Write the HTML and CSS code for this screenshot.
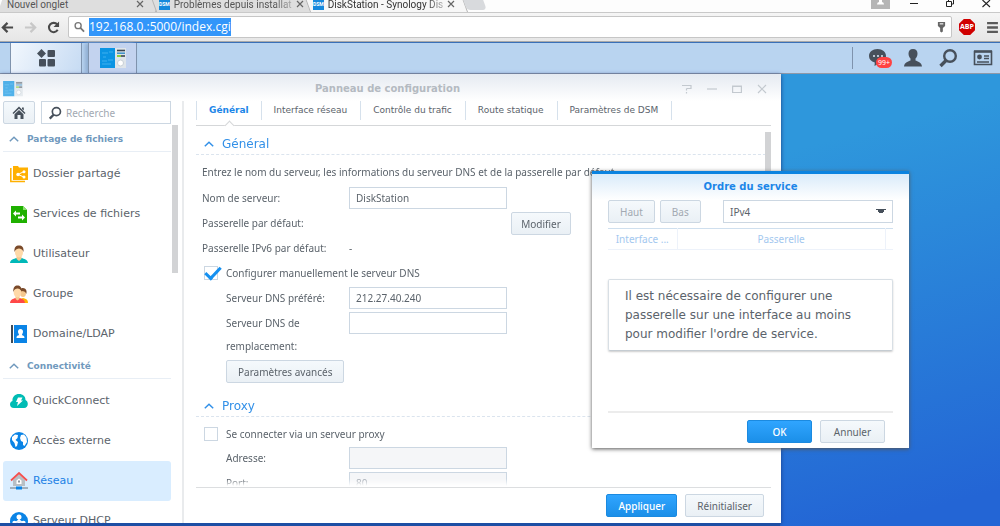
FILE: index.html
```html
<!DOCTYPE html>
<html lang="fr">
<head>
<meta charset="utf-8">
<title>DiskStation - Synology DiskStation</title>
<link rel="stylesheet" href="styles.css">
</head>
<body>
<svg class="defs" aria-hidden="true">
  <symbol id="panel" viewBox="0 0 26 21">
    <rect width="15" height="20" fill="#0b94e3"/><rect x="15" width="11" height="20" fill="#dfe5ea"/>
    <path d="M2 5h6M9 4h4M3 9h3M2 13h5M8 12h5M2 16h9" stroke="#3fb0ef" stroke-width="1"/>
    <path d="M17 2.500h8" stroke="#3c4650" stroke-width="1.600"/><path d="M17 5.200h8" stroke="#3a90c8" stroke-width="1.500"/><path d="M17 8h4" stroke="#7ac810" stroke-width="1.600"/><path d="M21 8h4" stroke="#3c4650" stroke-width="1.600"/>
    <circle cx="20.500" cy="15" r="3" fill="#fff" stroke="#bcc6ce" stroke-width=".8"/>
  </symbol>
  <symbol id="lens" viewBox="0 0 20 20">
    <circle cx="12" cy="8" r="5.800" fill="none" stroke="#47505b" stroke-width="2.400"/><path d="M8 12.500L2.500 18" stroke="#47505b" stroke-width="3.400"/>
  </symbol>
  <symbol id="up" viewBox="0 0 10 6"><path d="M.8 5.200L5 1.200 9.200 5.200" fill="none" stroke="currentColor" stroke-width="1.500"/></symbol>
  <symbol id="close" viewBox="0 0 8 8"><path d="M1 1l6 6M7 1L1 7" stroke="currentColor" stroke-width="1.200"/></symbol>
</svg>

<header class="browser">
  <div class="strip">
    <div class="tab"><span class="tab-name">Nouvel onglet</span><button class="tab-close" aria-label="Fermer"><svg><use href="#close"/></svg></button></div>
    <div class="tab"><span class="fav">DSM</span><span class="tab-name">Problèmes depuis installat</span><button class="tab-close" aria-label="Fermer"><svg><use href="#close"/></svg></button></div>
    <div class="tab active"><span class="fav">DSM</span><span class="tab-name">DiskStation - Synology Dis</span><button class="tab-close" aria-label="Fermer"><svg><use href="#close"/></svg></button></div>
    <button class="new-tab" aria-label="Nouvel onglet"></button>
    <div class="os-buttons">
      <button aria-label="Profil" class="profile"><svg viewBox="0 0 19 9"><path d="M6 4.500Q6 2 8 2V0h3v2q2 0 2 2.500z" fill="#fff"/></svg></button>
      <button aria-label="Réduire"><svg viewBox="0 0 10 8"><path d="M1 3.500h8" stroke="#222"/></svg></button>
      <button aria-label="Restaurer"><svg viewBox="0 0 10 8"><path d="M1.500 1.500h5v5h-5zM3.500 1V-1h5v5h-2" fill="none" stroke="#222"/></svg></button>
      <button aria-label="Fermer"><svg viewBox="0 0 10 8"><path d="M1.500 0L9 7M9 0L1.500 7" stroke="#222" stroke-width="1.100"/></svg></button>
    </div>
  </div>
  <div class="toolbar">
    <button aria-label="Précédent"><svg viewBox="0 0 14 14"><path d="M7 2L2 7l5 5M2 7h11" fill="none" stroke="#4a4a4a" stroke-width="2.400"/></svg></button>
    <button aria-label="Suivant"><svg viewBox="0 0 14 14"><path d="M7 2l5 5-5 5M12 7H1" fill="none" stroke="#c8c8c8" stroke-width="2.400"/></svg></button>
    <button aria-label="Actualiser"><svg viewBox="0 0 14 14"><path d="M11.500 9.500A5 5 0 1 1 11 3.800" fill="none" stroke="#4a4a4a" stroke-width="2.200"/><path d="M13 .5v6H7z" fill="#4a4a4a"/></svg></button>
    <div class="address">
      <svg viewBox="0 0 12 12" class="find"><circle cx="4.500" cy="4.500" r="3.300" fill="none" stroke="#777" stroke-width="1.500"/><path d="M7 7l4 4" stroke="#777" stroke-width="2"/></svg>
      <div class="url" role="textbox" contenteditable="true" aria-label="Adresse"><span>192.168.0.:5000/index.cgi</span></div>
      <svg viewBox="0 0 10 12" class="key"><path d="M1 .5h8v4.500L6.500 7v4L5 12 3.500 11V7L1 5z" fill="#666"/><path d="M3 2.500h4" stroke="#fff" stroke-width="1.200"/></svg>
    </div>
    <button class="abp" aria-label="Adblock Plus">ABP</button>
    <button aria-label="Menu" class="menu"><svg viewBox="0 0 12 12"><path d="M1 2h10M1 6h10M1 10h10" stroke="#5a5a5a" stroke-width="2.200"/></svg></button>
  </div>
</header>

<nav class="taskbar">
  <button class="apps" aria-label="Menu principal"><svg viewBox="0 0 18 18"><path d="M4.500 0L9 4.500 4.500 9 0 4.500z" fill="#47505b"/><rect x="10.500" y="1" width="7.500" height="7" rx="1" fill="#47505b"/><rect x="2" y="10" width="7" height="7.500" rx="1" fill="#47505b"/><rect x="10.500" y="10" width="7.500" height="7.500" rx="1" fill="#47505b"/></svg></button>
  <button class="running" aria-label="Panneau de configuration"><svg><use href="#panel"/></svg></button>
  <div class="tray">
    <button class="notify" aria-label="Notifications"><svg viewBox="0 0 20 20"><path d="M9.500 1C14.500 1 18 4 18 8s-3 7-7 7.200L6.500 18l.3-3.500C3 13.500 1 11 1 8c0-4 3.500-7 8.500-7z" fill="#47505b"/><path d="M5 8h2M9 8h2M13 8h2" stroke="#dce8f5" stroke-width="1.600"/></svg><span class="badge">99+</span></button>
    <button aria-label="Utilisateur"><svg viewBox="0 0 20 20"><path d="M10 1c3 0 4.500 2 4.500 4.500 0 2.500-1 4-2 5v2c2 1 6 1.500 6.500 6H1c.5-4.500 4.500-5 6.500-6v-2c-1-1-2-2.500-2-5C5.500 3 7 1 10 1z" fill="#47505b"/></svg></button>
    <button aria-label="Rechercher"><svg><use href="#lens"/></svg></button>
    <button aria-label="Widgets"><svg viewBox="0 0 20 20"><path d="M1.500 3.500h17v13h-17z" fill="none" stroke="#47505b" stroke-width="1.600"/><path d="M1 3.500h18" stroke="#47505b" stroke-width="2.500"/><circle cx="6.500" cy="9" r="2.400" fill="#47505b"/><path d="M11 8h5M11 10.500h5M4 14h12" stroke="#47505b" stroke-width="1.400"/></svg></button>
  </div>
</nav>

<main class="desktop">
  <section class="window">
    <header class="title-bar">
      <svg class="app-icon"><use href="#panel"/></svg>
      <h1>Panneau de configuration</h1>
      <div class="controls">
        <button aria-label="Aide"><svg viewBox="0 0 10 10"><path d="M0 1.500h9v3H4.500M4.500 4.500v2M4.500 8v1.500" fill="none" stroke="#c3c9cf" stroke-width="1.200"/></svg></button>
        <button aria-label="Réduire"><svg viewBox="0 0 10 10"><path d="M0 5h10" stroke="#c3c9cf" stroke-width="1.200"/></svg></button>
        <button aria-label="Agrandir"><svg viewBox="0 0 10 10"><path d="M.6 2h8.800v6.500H.6zM0 2.300h10" fill="none" stroke="#c3c9cf" stroke-width="1.200"/></svg></button>
        <button aria-label="Fermer"><svg viewBox="0 0 10 10"><path d="M1 1l8 8M9 1L1 9" stroke="#c3c9cf" stroke-width="1.200"/></svg></button>
      </div>
    </header>
    <div class="window-body">
      <aside class="sidebar">
        <div class="side-tools">
          <button class="btn home" aria-label="Accueil"><svg viewBox="0 0 14 14"><path d="M7 .5L13.500 7l-1 1L7 2.800 1.500 8l-1-1z" fill="#47505b"/><path d="M7 4l4.500 4.300V13h-3V9h-3v4h-3V8.300zM10 1.500h1.800v3L10 3z" fill="#47505b"/></svg></button>
          <label class="search"><svg><use href="#lens"/></svg><input type="search" placeholder="Recherche" aria-label="Recherche"></label>
        </div>
        <div class="side-scroll">
          <h2><svg><use href="#up"/></svg>Partage de fichiers</h2>
          <ul>
            <li><a href="#"><svg viewBox="0 0 18 18"><path d="M3 1h5l1 1.500h9V15H3z" fill="#ffb000"/><path d="M.8 3v13.500H15" fill="none" stroke="#ffb000" stroke-width="1.500"/><path d="M14 6.500L8 9.500l6 2.500" fill="none" stroke="#fff"/><circle cx="8" cy="9.500" r="1.700" fill="#fff"/><circle cx="14" cy="6.800" r="1.500" fill="#fff"/><circle cx="14" cy="12" r="1.500" fill="#fff"/></svg>Dossier partagé</a></li>
            <li><a href="#"><svg viewBox="0 0 18 18"><path d="M1 1h12l4 4v13H1z" fill="#1fb000"/><path d="M13 1v4h4z" fill="#8ce070"/><path d="M3 8.500l3-3v2h4v2H6v2zM15 12.500l-3-3v2H8v2h4v2z" fill="#fff"/></svg>Services de fichiers</a></li>
            <li><a href="#"><svg viewBox="0 0 18 18"><path d="M0 18c.5-4 4-4 6.500-5h5c2.500 1 6 1 6.500 5z" fill="#00b8b8"/><path d="M6.500 11h5v3L9 16l-2.500-2z" fill="#f5c88f"/><ellipse cx="9" cy="7.500" rx="4" ry="5" fill="#ffd9a8"/><path d="M4.500 7C4 2 6 .5 9 .5S14 2 13.500 7c-1-3-3-3.500-4.500-3.500S5.500 4 4.500 7z" fill="#7a4a2a"/></svg>Utilisateur</a></li>
            <li><a href="#"><svg viewBox="0 0 18 18"><path d="M10 18v-4l3-1c3 1 5 1 5 5z" fill="#ffb400"/><ellipse cx="13" cy="8" rx="3" ry="4" fill="#f5c88f"/><path d="M10 5c1-3 6-2.500 6.500 1v3c-1-2-2-3-5-3z" fill="#7a4a2a"/><path d="M0 18c.5-4 3-4 5.500-5h4c2.500 1 5 1 5.500 5z" fill="#ff4848"/><path d="M5.500 11h4v3l-2 1.500-2-1.500z" fill="#f5c88f"/><ellipse cx="7.500" cy="7.500" rx="3.800" ry="5" fill="#ffd9a8"/><path d="M3.300 7C3 2 5 .5 7.500.5S12 2 11.700 7c-1-3-2.500-3.500-4.200-3.500S4.300 4 3.300 7z" fill="#7a4a2a"/></svg>Groupe</a></li>
            <li><a href="#"><svg viewBox="0 0 18 18"><path d="M1 0h2v18H1z" fill="#3e4b57"/><path d="M4 0h13v18H4z" fill="#0a84e6"/><path d="M10.500 4c2 0 2.500 1.500 2.500 2.800 0 1.500-1 2.200-1 3.200 1 .8 2.500.5 2.500 3h-8c0-2.500 1.500-2.200 2.500-3 0-1-1-1.700-1-3.200C8 5.500 8.500 4 10.500 4z" fill="#fff"/></svg>Domaine/LDAP</a></li>
          </ul>
          <h2><svg><use href="#up"/></svg>Connectivité</h2>
          <ul>
            <li><a href="#"><svg viewBox="0 0 18 18"><path d="M4 16c-5 0-5-6-1.500-7C2 5 5 2 9 2s6.500 2.500 6.500 6c3.500 1.500 3 8-1.500 8z" fill="#00bcb4"/><path d="M8 5.500h4.500L11 8.500h2L7 14l1-4H6z" fill="#fff"/></svg>QuickConnect</a></li>
            <li><a href="#"><svg viewBox="0 0 18 18"><circle cx="9" cy="9" r="9" fill="#0a84e6"/><path d="M2 5l3-2.500 3 .5-.5 3L5.500 8l2.500 2-1 4-1.500 1-1-4L2 8zM11 3l3-.5 2.500 3L17 10l-2.500 4-1.500-1v-3l-2-1-1-3z" fill="#fff"/></svg>Accès externe</a></li>
            <li><a href="#" class="selected" aria-current="page"><svg viewBox="0 0 18 18"><path d="M3 8l6-6 6 6v6H3z" fill="#b8bfc5"/><path d="M9 6.500l2.500 2V12h-5V8.500z" fill="#fff"/><path d="M8 8.500h2v2H8z" fill="#8f989f"/><path d="M1 8.500L9 1l8 7.500" fill="none" stroke="#f5504e" stroke-width="1.800"/><path d="M0 16h18" stroke="#66727c"/><path d="M6 14.500h6v3H6z" fill="#0a84e6"/></svg>Réseau</a></li>
            <li><a href="#"><svg viewBox="0 0 18 18"><circle cx="9" cy="9" r="9" fill="#0a84e6"/><path d="M9 4v4M9 8l-4 3M9 8l4 3" stroke="#fff" stroke-width="1.500"/><circle cx="9" cy="5" r="2.500" fill="#fff"/><circle cx="4.500" cy="11" r="2.200" fill="#fff"/><circle cx="13.500" cy="11" r="2.200" fill="#fff"/><circle cx="9" cy="11" r="2" fill="#fff"/></svg>Serveur DHCP</a></li>
          </ul>
        </div>
      </aside>
      <div class="content">
        <nav class="tabs">
          <a href="#" class="current">Général</a><a href="#">Interface réseau</a><a href="#">Contrôle du trafic</a><a href="#">Route statique</a><a href="#">Paramètres de DSM</a>
        </nav>
        <form class="settings">
          <h3><svg><use href="#up"/></svg>Général</h3>
          <p>Entrez le nom du serveur, les informations du serveur DNS et de la passerelle par défaut.</p>
          <div class="row"><label for="name">Nom de serveur:</label><input id="name" type="text" value="DiskStation"></div>
          <div class="row"><span>Passerelle par défaut:</span><button type="button" class="btn modify">Modifier</button></div>
          <div class="row"><span>Passerelle IPv6 par défaut:</span><span>-</span></div>
          <div class="check"><input type="checkbox" id="manual" checked><label for="manual">Configurer manuellement le serveur DNS</label></div>
          <div class="row inner"><label for="dns1">Serveur DNS préféré:</label><input id="dns1" type="text" value="212.27.40.240"></div>
          <div class="row inner tall"><label for="dns2">Serveur DNS de remplacement:</label><input id="dns2" type="text"></div>
          <div class="inner"><button type="button" class="btn advanced">Paramètres avancés</button></div>
          <h3 class="second"><svg><use href="#up"/></svg>Proxy</h3>
          <div class="check proxy"><input type="checkbox" id="proxy"><label for="proxy">Se connecter via un serveur proxy</label></div>
          <div class="row inner"><label for="addr">Adresse:</label><input id="addr" type="text" disabled></div>
          <div class="row inner"><label for="port">Port:</label><input id="port" type="text" value="80" disabled></div>
        </form>
        <footer class="actions">
          <button class="btn primary">Appliquer</button><button class="btn">Réinitialiser</button>
        </footer>
      </div>
    </div>
  </section>

  <section class="dialog" role="dialog" aria-labelledby="dlg">
    <h2 id="dlg">Ordre du service</h2>
    <div class="dialog-tools">
      <button class="btn" disabled>Haut</button><button class="btn" disabled>Bas</button>
      <select aria-label="Protocole"><option>IPv4</option><option>IPv6</option></select>
    </div>
    <table><thead><tr><th class="iface">Interface ...</th><th>Passerelle</th><th class="end"></th></tr></thead></table>
    <p class="message">Il est nécessaire de configurer une passerelle sur une interface au moins pour modifier l'ordre de service.</p>
    <footer><button class="btn primary">OK</button><button class="btn">Annuler</button></footer>
  </section>
</main>
</body>
</html>
```
FILE: styles.css
```css
* { box-sizing: border-box; }
body {
  margin: 0;
  height: 100vh;
  display: flex;
  flex-direction: column;
  overflow: hidden;
  font: 10px/14px "Noto Sans", Tahoma, sans-serif;
  color: #5b636b;
}
button, input, select { font: inherit; color: inherit; margin: 0; }
button { border: 0; padding: 0; background: none; }
a { color: inherit; text-decoration: none; }
h1, h2, h3, p, ul { margin: 0; padding: 0; font-weight: normal; }
ul { list-style: none; }
svg { display: block; flex: none; }
.defs { display: none; }

/* Browser */
.browser { font-family: "Open Sans", "Noto Sans", sans-serif; color: #555; }
.strip { display: flex; height: 13px; background: #fdfdfd; border-bottom: 1px solid #c9c9c9; overflow: hidden; }
.tab {
  position: relative;
  z-index: 0;
  display: flex;
  width: 154px;
  gap: 4px;
  padding: 0 10px 0 5px;
  font: 10px/9px Roboto, "Open Sans", sans-serif;
}
.tab::before {
  content: "";
  position: absolute;
  z-index: -1;
  inset: 0 -4px 0 0;
  background: #dedede;
  border-right: 1px solid #b4b4b4;
  transform: skewX(-20deg);
}
.tab + .tab::before { border-left: 1px solid #b4b4b4; transform: skewX(20deg); }
.tab.active { color: #333; height: 13px; }
.tab.active::before { background: #f7f7f7; }
.tab:first-child { padding-left: 7px; }
.tab-name {
  flex: 1;
  height: 12px;
  white-space: nowrap;
}
.tab + .tab .tab-name { mask-image: linear-gradient(90deg, #000 85%, #0005); }
.tab-close { width: 8px; height: 8px; color: #666; }
.tab-close svg { width: 8px; height: 8px; }
.fav { width: 12px; height: 10px; background: #1688dc; color: #fff; font-size: 5px; font-weight: bold; text-align: center; }
.new-tab { width: 20px; height: 10px; margin-left: 3px; background: #d8dadd; border-radius: 0 0 4px 4px; transform: skewX(20deg); }
.os-buttons { display: flex; margin-left: auto; gap: 26px; padding-right: 9px; align-items: flex-start; }
.os-buttons svg { width: 10px; height: 8px; }
.os-buttons .profile, .os-buttons .profile svg { width: 19px; height: 9px; background: #b5b5b5; }
.os-buttons .profile { margin-right: -7px; }
.toolbar {
  display: flex;
  align-items: center;
  gap: 10px;
  height: 29px;
  padding: 0 1px;
  background: linear-gradient(#f5f5f5, #e6e6e6);
  border-bottom: 1px solid #a9a9a9;
}
.toolbar > button svg { width: 13px; height: 13px; }
.address {
  flex: 1;
  display: flex;
  align-items: center;
  gap: 4px;
  height: 22px;
  margin-left: -2px;
  padding: 0 5px;
  background: #fff;
  border: 1px solid #c6c6c6;
  border-radius: 2px;
}
.find { width: 11px; height: 12px; }
.key { width: 9px; height: 12px; }
.url { flex: 1; font-size: 12px; line-height: 18px; color: #fff; }
.url span { display: inline-block; background: #3296fa; }
.toolbar .abp {
  width: 16px;
  height: 16px;
  margin-left: -3px;
  background: #d00000;
  clip-path: polygon(30% 0, 70% 0, 100% 30%, 100% 70%, 70% 100%, 30% 100%, 0 70%, 0 30%);
  color: #fff;
  font-size: 7px;
  font-weight: bold;
  line-height: 16px;
}
.toolbar .menu { margin-left: 1px; }

/* DSM taskbar */
.taskbar {
  display: flex;
  height: 32px;
  padding-left: 10px;
  background: #b9d4f0;
  border-top: 1px solid #3a70b8;
  border-bottom: 1px solid #8e98a8;
}
.taskbar button { display: grid; place-items: center; }
.apps { width: 72px; }
.taskbar .apps { background: linear-gradient(115deg, #f2f7fd, #c6dbf3); border: solid #7f93ad; border-width: 0 1px; }
.apps svg { width: 18px; height: 18px; }
.taskbar .running { width: 49px; margin-left: 6px; background: #c3d3ef; border: solid #7f93ad; border-width: 0 1px; box-shadow: -3px 0 4px #8fadd1; }
.running svg { width: 26px; height: 21px; }
.tray { display: flex; align-items: center; gap: 15px; margin: 0 7px 0 auto; }
.tray::before { content: ""; width: 1px; height: 22px; background: #7f93ad; }
.tray button { position: relative; width: 20px; height: 20px; }
.tray svg { width: 20px; height: 20px; }
.badge { position: absolute; left: 8px; top: 9px; padding: 0 2px; background: #ff4242; border-radius: 6px; color: #fff; font-size: 7px; line-height: 11px; }

/* Desktop */
.desktop { position: relative; flex: 1; min-height: 0; background: linear-gradient(165deg, #2e97dc 40%, #2365d5 95%); }
.window { display: flex; flex-direction: column; width: 78.1%; height: calc(100% - 3px); background: #fff; box-shadow: 0 1px 4px #1a3a80; overflow: hidden; }
.desktop::after { content: ""; position: absolute; inset: auto 22% 0 0; height: 3px; background: #1d4ea4; }
.title-bar { display: flex; align-items: center; height: 27px; padding: 2px 14px 0 3px; background: linear-gradient(#e5eaf1, #fff); }
.app-icon { width: 20px; height: 16px; opacity: .7; }
.title-bar h1 { flex: 1; padding-left: 70px; text-align: center; font: bold 10px/14px "DejaVu Sans", Verdana, sans-serif; color: #b4bac1; }
.controls { display: flex; gap: 15px; }
.controls svg { width: 10px; height: 10px; }
.window-body { flex: 1; display: flex; min-height: 0; }

.btn {
  height: 23px;
  padding: 0 11px;
  border: 1px solid #ccd7e2;
  border-radius: 2px;
  background: linear-gradient(#f5f9fc, #eaf0f5);
  color: #5b636b;
  white-space: nowrap;
}
.btn:disabled { color: #a2a9b2; }
.btn.primary { background: linear-gradient(#30a5ff, #1b8fe8); border-color: #1b8ae0; color: #fff; font-weight: 500; }

.sidebar { position: relative; display: flex; flex-direction: column; width: 184px; padding-left: 3px; border-right: 2px solid #e9ebed; }
.sidebar::after { content: ""; position: absolute; right: 4px; top: 24px; width: 6px; height: 148px; background: #d2d3d5; }
.side-tools { display: flex; gap: 6px; padding-right: 11px; }
.home { width: 32px; padding: 0; display: grid; place-items: center; }
.home svg { width: 14px; height: 14px; }
.search { flex: 1; display: flex; align-items: center; gap: 4px; height: 23px; padding: 0 6px; border: 1px solid #ccd7e2; }
.search svg { width: 14px; height: 14px; }
.search input { min-width: 0; width: 90px; border: 0; padding: 0; outline: 0; }
.search input::placeholder { color: #a2a9b2; }
.side-scroll { flex: 1; min-height: 0; overflow: hidden; margin-right: 11px; padding-top: 3px; }
.side-scroll h2 { display: flex; align-items: center; gap: 8px; height: 25px; padding-left: 6px; border-bottom: 1px solid #e8eef5; font: bold 9px/14px "DejaVu Sans", Verdana, sans-serif; color: #7099bd; }
.side-scroll h2 svg, h3 svg { width: 10px; height: 6px; }
.side-scroll ul { padding-top: 2px; }
.side-scroll a { display: flex; align-items: center; gap: 5px; height: 40px; padding-left: 7px; border-radius: 3px; font: 11px/14px "DejaVu Sans", Verdana, sans-serif; }
.side-scroll a svg { width: 18px; height: 18px; }
.side-scroll .selected { background: #d9edff; color: #2080e5; }

.content { flex: 1; min-width: 0; display: flex; flex-direction: column; padding: 0 10px 0 12px; }
.tabs { display: flex; align-items: flex-start; height: 25px; border-bottom: 1px solid #d5d7d9; font: 9px/19px "DejaVu Sans", Verdana, sans-serif; }
.tabs a { position: relative; padding: 0 13px 0 12px; border-right: 1px solid #d6e1ec; }
.tabs a:first-child { padding: 0 12px; border-left: 1px solid #d6e1ec; }
.tabs .current { font-weight: bold; color: #1c86e8; }
.tabs .current::after { content: ""; position: absolute; left: 50%; top: 21px; width: 6px; height: 6px; margin-left: -3px; background: #fff; border: solid #d5d7d9; border-width: 1px 0 0 1px; transform: rotate(45deg); }
.settings { position: relative; flex: 1; min-height: 0; overflow: hidden; padding-top: 8px; mask-image: linear-gradient(#000 calc(100% - 8px), transparent calc(100% - 1px)); }
.settings::after { content: ""; position: absolute; right: 0; top: 6px; width: 6px; height: 290px; background: #d2d3d5; }
h3 { display: flex; align-items: center; gap: 8px; height: 21px; padding-left: 8px; border-bottom: 1px dashed #dbe4ee; font: 12px/14px "DejaVu Sans", Verdana, sans-serif; color: #3290e8; }
.settings p { height: 32px; padding: 2px 0 0 6px; line-height: 30px; white-space: nowrap; }
.row { display: flex; align-items: flex-start; height: 25px; padding-left: 6px; line-height: 23px; }
.row > :first-child { width: 147px; }
.row.inner { padding-left: 30px; }
.row.inner > :first-child { width: 123px; padding-right: 12px; }
.row.tall { height: 48px; }
.inner { padding-left: 30px; }
input[type=text] { width: 158px; height: 22px; padding: 0 6px; border: 1px solid #ccd7e2; background: #fff; }
input[type=text]:disabled { background: #f5f6f8; color: #a2a9b2; }
.btn.modify { width: 60px; margin-left: 162px; padding: 0; }
.check { display: flex; align-items: center; gap: 8px; height: 22px; margin-bottom: 3px; padding-left: 8px; }
.check input { appearance: none; width: 14px; height: 14px; border: 1px solid #ccd7e2; }
.check input:checked::before { content: ""; display: block; width: 13px; height: 6px; border: solid #1590f0; border-width: 0 0 3px 3px; transform: rotate(-47deg); }
.second { margin-top: 13px; }
.proxy { height: 27px; padding-top: 6px; }
.actions { display: flex; justify-content: flex-end; align-items: center; gap: 8px; height: 36px; padding-right: 7px; border-top: 1px solid #dcdee0; }

/* Dialog */
.dialog { position: absolute; left: 592px; top: 97px; width: 317px; padding: 0 16px; background: #fff; border-top: 3px solid #0b83e0; box-shadow: 0 1px 4px #555; }
.dialog h2 { margin: 0 -16px; height: 26px; text-align: center; font: bold 10px/25px "DejaVu Sans", Verdana, sans-serif; color: #1c86e8; background: linear-gradient(#d9ebfa, #fff); }
.dialog-tools { display: flex; gap: 5px; padding-bottom: 5px; }
.dialog-tools .btn { min-width: 40px; }
select {
  appearance: none;
  width: 170px;
  height: 23px;
  margin-left: auto;
  padding: 0 6px;
  border: 1px solid #ccd7e2;
  border-radius: 0;
  background:
    linear-gradient(45deg, transparent 50%, #47505b 50%) right 11px center / 5px 5px no-repeat,
    linear-gradient(135deg, #47505b 50%, transparent 50%) right 6px center / 5px 5px no-repeat,
    #fff;
}
table { width: 100%; table-layout: fixed; border-collapse: collapse; border-top: 1px solid #cfdfee; }
th { height: 21px; padding: 0; font-weight: normal; color: #a3c8ef; border: solid #edf2fa; border-width: 0 1px 1px 0; }
thead tr { border-top: 1px solid #cfdfee; }
.iface { width: 69px; }
.end { width: 8px; border-right: 0; }
.message { margin-top: 29px; padding: 7px 16px 6px; border: 1px solid #d8dfe5; border-bottom-color: #c5ccd2; border-radius: 2px; box-shadow: 0 1px 2px #ccc; font: 12px/19px "DejaVu Sans", Verdana, sans-serif; }
.dialog footer { display: flex; justify-content: flex-end; gap: 8px; margin-top: 60px; padding: 7px 8px 5px; border-top: 2px solid #ececec; }
.dialog footer .btn { width: 65px; padding: 0; }
```
